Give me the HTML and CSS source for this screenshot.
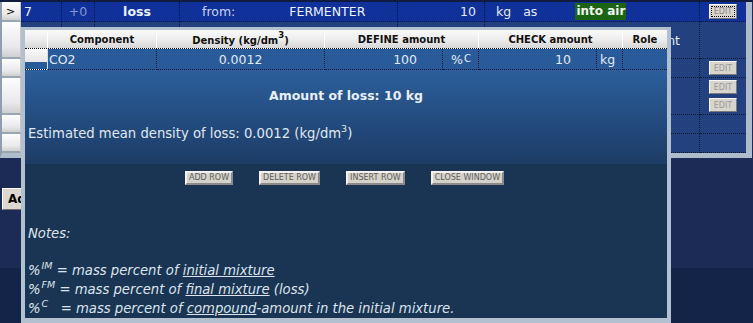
FILE: index.html
```html
<!DOCTYPE html>
<html>
<head>
<meta charset="utf-8">
<title>Loss</title>
<link rel="stylesheet" href="styles.css">
</head>
<body>
<div class="steps">
  <div class="row r-sel">
    <div class="c c0">&gt;</div>
    <div class="c c-num">7</div>
    <div class="c c-ctr c-dim">+0</div>
    <div class="c c-ctr"><b>loss</b></div>
    <div class="c c-from"><span class="from">from:</span><span class="src">FERMENTER</span></div>
    <div class="c c-right">10</div>
    <div class="c c-unit"><span>kg</span><span class="as">as</span><span class="dest">into air</span></div>
    <div class="c c-btn"><button class="edit focus">EDIT</button></div>
  </div>
  <div class="row r-tall">
    <div class="c c0"></div>
    <div class="c"></div>
    <div class="c"></div>
    <div class="c"></div>
    <div class="c"></div>
    <div class="c"></div>
    <div class="c c-note"><span class="peek">nt</span></div>
    <div class="c c-btn"></div>
  </div>
  <div class="row r-std">
    <div class="c c0"></div>
    <div class="c"></div>
    <div class="c"></div>
    <div class="c"></div>
    <div class="c"></div>
    <div class="c"></div>
    <div class="c"></div>
    <div class="c c-btn"><button class="edit">EDIT</button></div>
  </div>
  <div class="row r-tall">
    <div class="c c0"></div>
    <div class="c"></div>
    <div class="c"></div>
    <div class="c"></div>
    <div class="c"></div>
    <div class="c"></div>
    <div class="c"></div>
    <div class="c c-btn c-stack"><button class="edit">EDIT</button><button class="edit">EDIT</button></div>
  </div>
  <div class="row r-std">
    <div class="c c0"></div>
    <div class="c"></div>
    <div class="c"></div>
    <div class="c"></div>
    <div class="c"></div>
    <div class="c"></div>
    <div class="c"></div>
    <div class="c c-btn"></div>
  </div>
  <div class="row r-std">
    <div class="c c0"></div>
    <div class="c"></div>
    <div class="c"></div>
    <div class="c"></div>
    <div class="c"></div>
    <div class="c"></div>
    <div class="c"></div>
    <div class="c c-btn"></div>
  </div>
</div>

<button class="addbtn">Add step</button>

<div class="popup">
  <div class="ptable">
    <div class="phead">
      <div class="h"></div>
      <div class="h">Component</div>
      <div class="h"><span>Density (kg/dm<sup>3</sup>)</span></div>
      <div class="h span2">DEFINE amount</div>
      <div class="h span2">CHECK amount</div>
      <div class="h">Role</div>
    </div>
    <div class="prow">
      <div class="d d0"></div>
      <div class="d d-left">CO2</div>
      <div class="d d-ctr">0.0012</div>
      <div class="d d-num">100</div>
      <div class="d d-unit">%<sup>C</sup></div>
      <div class="d d-num">10</div>
      <div class="d d-kg">kg</div>
      <div class="d"></div>
    </div>
  </div>
  <div class="info">
    <p class="amount">Amount of loss: 10 kg</p>
    <p class="density">Estimated mean density of loss: 0.0012 (kg/dm<sup>3</sup>)</p>
  </div>
  <div class="controls">
    <div class="buttons">
      <button class="btn">ADD ROW</button>
      <button class="btn">DELETE ROW</button>
      <button class="btn">INSERT ROW</button>
      <button class="btn">CLOSE WINDOW</button>
    </div>
    <div class="notes">
      <p class="nhead">Notes:</p>
      <p class="nblank"></p>
      <p class="nline">%<sup>IM</sup> = mass percent of <u>initial mixture</u></p>
      <p class="nline">%<sup>FM</sup> = mass percent of <u>final mixture</u> (loss)</p>
      <p class="nline">%<sup>C</sup>&nbsp;&nbsp; = mass percent of <u>compound</u>-amount in the initial mixture.</p>
    </div>
  </div>
</div>
</body>
</html>
```

FILE: styles.css
```css
* { box-sizing: border-box; }
html, body { margin: 0; padding: 0; }
body {
  width: 753px;
  height: 323px;
  overflow: hidden;
  position: relative;
  font-family: "DejaVu Sans", Verdana, sans-serif;
  font-size: 12.5px;
  color: #e4eaf4;
  background: linear-gradient(to bottom, #0f1c40 0, #0f1c40 2px, #1b2b56 2px, #1b2b56 268px, #142348 268px);
}
p { margin: 0; }
sup { font-size: 75%; line-height: 0; vertical-align: super; }

/* background steps table */
.steps {
  margin-top: 2px;
  width: 752px;
  border-left: 2px solid #8e9eb0;
  border-right: 6px solid #aebccb;
  border-bottom: 5px solid #aebccb;
  background: #23417e;
}
.row {
  display: grid;
  grid-template-columns: 19px 41px 33px 85px 218px 87px 215px 46px;
}
.r-sel { height: 20px; background: #10309a; }
.r-tall { height: 37px; }
.r-std { height: 19px; }
.c {
  display: flex;
  align-items: center;
  white-space: nowrap;
  overflow: hidden;
  border-right: 1px dotted #0a1636;
  border-bottom: 1px dotted #0a1636;
}
.c0 {
  background: linear-gradient(to bottom, #fdfdfd, #e9e9e9 70%, #cfcfcf);
  border-right: 1px solid #c8c8c8;
  border-bottom: 2px solid #9aa6b2;
  color: #000;
  font-size: 11px;
  padding-left: 4px;
}
.c-num { padding-left: 3px; color: #e8eeff; }
.c-ctr { justify-content: center; color: #eef2ff; }
.c-dim { color: #8797cc; }
.c-from { padding-left: 22px; }
.from { color: #c9d4f2; }
.src { margin-left: 54px; color: #eef2ff; }
.c-right { justify-content: flex-end; padding-right: 8px; }
.c-unit { padding-left: 11px; }
.as { margin-left: 12px; }
.dest {
  margin-left: 38px;
  background: #1a6412;
  font-weight: bold;
  font-size: 12px;
  color: #f2f6f2;
  padding: 1px 1px 2px;
}
.c-note { justify-content: flex-end; padding-right: 19px; color: #e4eaf6; }
.peek {
  display: flex;
  justify-content: flex-end;
  width: 9px;
  overflow: hidden;
}
.c-btn { justify-content: center; border-right: none; }
.c-stack { flex-direction: column; gap: 4px; }
.edit {
  width: 28px;
  height: 14px;
  padding: 0;
  font-family: "DejaVu Sans", Verdana, sans-serif;
  font-size: 8px;
  color: #9a9a9a;
  background: #d9d5cd;
  border: 1px solid;
  border-color: #f6f6f6 #7a7a7a #7a7a7a #f6f6f6;
}
.edit.focus { height: 15px; outline: 1px dotted #000; outline-offset: -3px; color: #888; }

.addbtn {
  display: block;
  margin: 30px 0 0 2px;
  height: 22px;
  padding: 0 5px;
  font-family: "DejaVu Sans", Verdana, sans-serif;
  font-size: 12px;
  font-weight: bold;
  color: #000;
  background: #dcd8d0;
  border: 1px solid;
  border-color: #fafafa #6e6e6e #6e6e6e #fafafa;
}

/* popup window */
.popup {
  position: absolute;
  left: 21px;
  top: 27px;
  width: 650px;
  height: 296px;
  border: 4px solid #b2c0cf;
  border-top-width: 3px;
  border-bottom-width: 5px;
  background: #1a3553;
  display: flex;
  flex-direction: column;
}
.phead, .prow {
  display: grid;
  grid-template-columns: 23px 109px 168px 118px 36px 118px 26px 44px;
}
.phead {
  height: 19px;
  background: linear-gradient(to bottom, #fafafa, #ececec 55%, #d6d6d6);
  border-bottom: 1px dotted #111;
  color: #111;
  font-size: 10px;
  font-weight: bold;
}
.h {
  display: flex;
  align-items: center;
  justify-content: center;
  border-right: 1px solid #ffffff;
  white-space: nowrap;
}
.h:last-child { border-right: none; }
.h span { padding-top: 3px; }
.h sup { font-size: 85%; vertical-align: 6px; }
.span2 { grid-column: span 2; }
.prow {
  height: 21px;
  background: #295b9a;
  color: #e2eaf6;
}
.d {
  display: flex;
  align-items: center;
  white-space: nowrap;
  border-right: 1px dotted #0b1a36;
  border-bottom: 1px dotted #0b1a36;
}
.d:last-child { border-right: none; }
.d0 { background: linear-gradient(to bottom, #fafafa, #e6e6e6 65%, #295b9a 65%); border-right: 1px solid #dcdcdc; }
.d-left { padding-left: 1px; }
.d-ctr { justify-content: center; }
.d-num { justify-content: flex-end; padding-right: 25px; }
.d-unit { padding-left: 8px; }
.d-unit sup { font-size: 80%; vertical-align: 6px; margin-left: 1px; }
.d-kg { padding-left: 3px; }

.info {
  height: 102px;
  background: linear-gradient(to bottom, #2c5f9c, #234b7e 55%, #1d3c66);
  padding: 18px 3px 0;
}
.amount {
  text-align: center;
  font-weight: bold;
  font-size: 12.5px;
  line-height: 16px;
  color: #e8eef8;
}
.density {
  margin-top: 22px;
  font-size: 13.2px;
  line-height: 16px;
  color: #e0e7f0;
}
.density sup { font-size: 72%; vertical-align: 6px; }
.controls {
  flex: 1;
  padding: 7px 3px 0;
}
.buttons {
  display: flex;
  justify-content: center;
  gap: 26px;
  padding-right: 3px;
}
.btn {
  height: 14px;
  padding: 0 2px;
  font-family: "DejaVu Sans", Verdana, sans-serif;
  font-size: 8px;
  line-height: 10px;
  color: #5e5e5e;
  background: #d6d2ca;
  border: 2px solid;
  border-color: #f2f2f2 #8a8a8a #8a8a8a #f2f2f2;
}
.notes {
  margin-top: 40px;
  font-size: 13.2px;
  font-style: italic;
  color: #dde4ee;
}
.nhead, .nblank { height: 18px; line-height: 18px; }
.nline { height: 19px; line-height: 19px; white-space: nowrap; }
.nline sup { font-size: 72%; vertical-align: 6px; margin-left: 1px; }
```
